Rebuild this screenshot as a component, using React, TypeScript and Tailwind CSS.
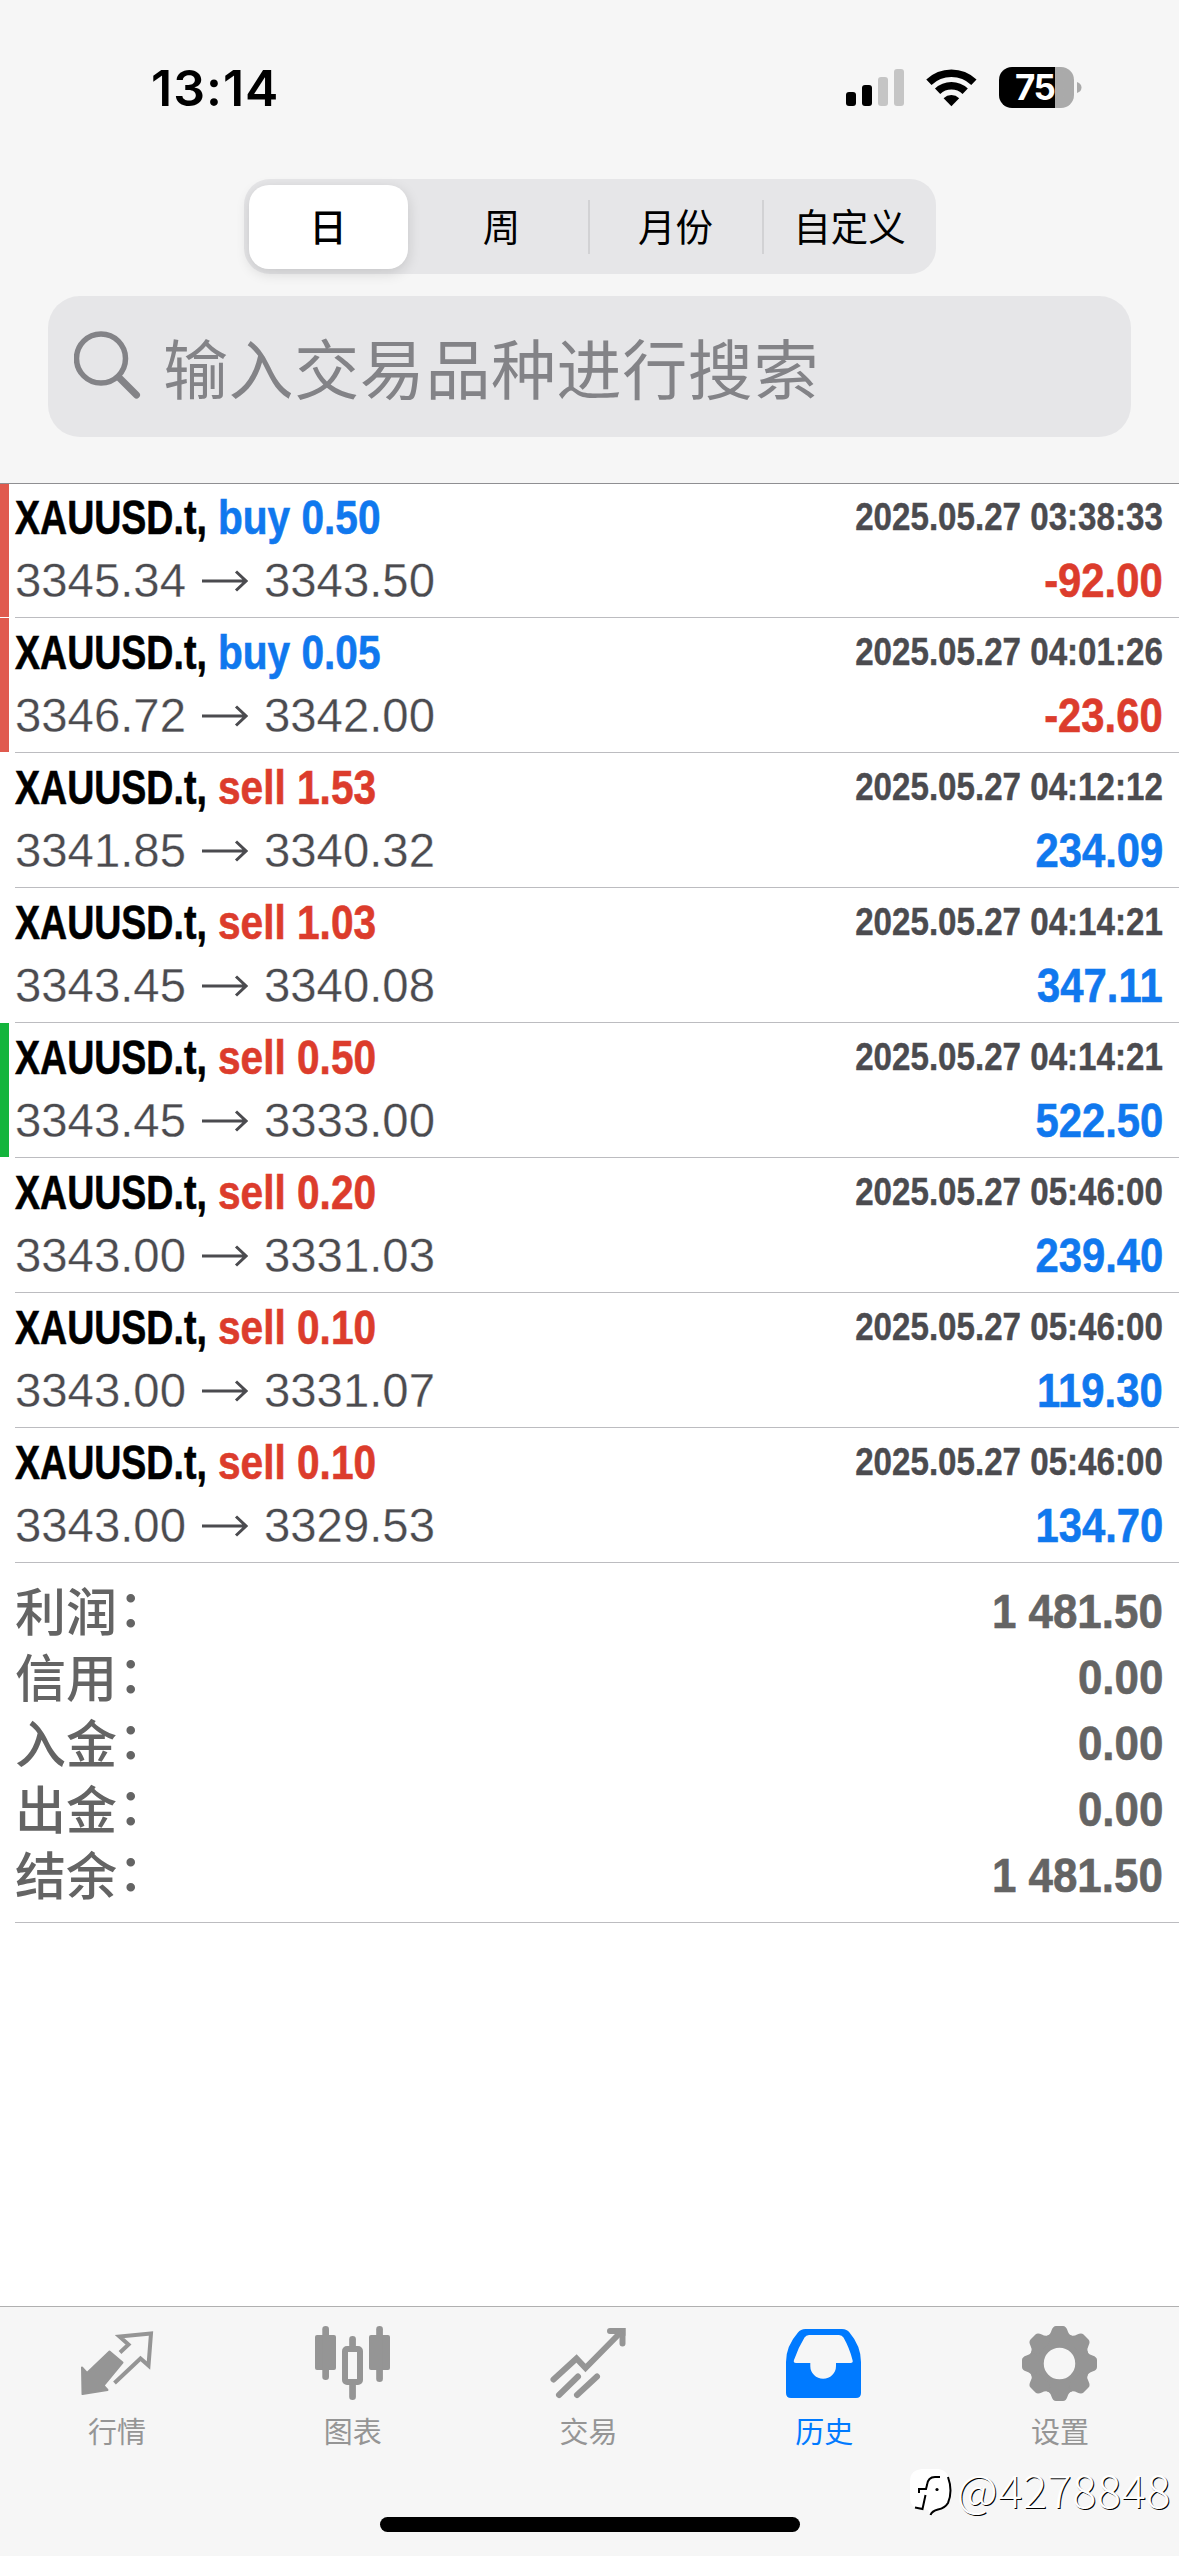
import type { ReactNode } from 'react';
import clsx from 'clsx';

type Deal = {
  side: 'buy' | 'sell';
  volume: string;
  open: string;
  close: string;
  time: string;
  profit: string;
  mark?: 'sl' | 'tp';
};

const deals: Deal[] = [
  { side: 'buy', volume: '0.50', open: '3345.34', close: '3343.50', time: '2025.05.27 03:38:33', profit: '-92.00', mark: 'sl' },
  { side: 'buy', volume: '0.05', open: '3346.72', close: '3342.00', time: '2025.05.27 04:01:26', profit: '-23.60', mark: 'sl' },
  { side: 'sell', volume: '1.53', open: '3341.85', close: '3340.32', time: '2025.05.27 04:12:12', profit: '234.09' },
  { side: 'sell', volume: '1.03', open: '3343.45', close: '3340.08', time: '2025.05.27 04:14:21', profit: '347.11' },
  { side: 'sell', volume: '0.50', open: '3343.45', close: '3333.00', time: '2025.05.27 04:14:21', profit: '522.50', mark: 'tp' },
  { side: 'sell', volume: '0.20', open: '3343.00', close: '3331.03', time: '2025.05.27 05:46:00', profit: '239.40' },
  { side: 'sell', volume: '0.10', open: '3343.00', close: '3331.07', time: '2025.05.27 05:46:00', profit: '119.30' },
  { side: 'sell', volume: '0.10', open: '3343.00', close: '3329.53', time: '2025.05.27 05:46:00', profit: '134.70' },
];

const totals = [
  { label: '利润', value: '1 481.50' },
  { label: '信用', value: '0.00' },
  { label: '入金', value: '0.00' },
  { label: '出金', value: '0.00' },
  { label: '结余', value: '1 481.50' },
];

const periods = ['日', '周', '月份', '自定义'];

function StatusBar() {
  return (
    <div className="flex h-[179px] items-start justify-between pr-[97px] pl-[151px]">
      <span className="mt-[58px] font-['Inter'] text-[50px] leading-[60px] font-semibold tracking-[1px]">13:14</span>
      <div className="mt-[67px] flex">
        <svg width="58" height="41" viewBox="0 0 58 41">
          <rect x="0" y="25" width="10" height="14" rx="3" />
          <rect x="16" y="18" width="10" height="21" rx="3" />
          <rect x="32" y="10" width="10" height="29" rx="3" fill="#c5c5c5" />
          <rect x="48" y="2" width="10" height="37" rx="3" fill="#c5c5c5" />
        </svg>
        <svg className="mt-0.5 ml-[22px]" width="51" height="38" viewBox="0 0 51 38" fill="none" stroke="#000" strokeWidth="7.6">
          <path d="M2.9 13.2A32.6 32.6 0 0 1 47.9 13.2" />
          <path d="M11.6 22.3A20 20 0 0 1 39.2 22.3" />
          <path d="M25.4 37.2 17.6 29.2A11.4 11.4 0 0 1 33.2 29.2Z" fill="#000" stroke="none" />
        </svg>
        <div className="ml-[22px] flex h-[41px] w-[75px] items-center overflow-hidden rounded-[13px] bg-linear-to-r from-black from-75% to-[#aaaaaa] to-75%">
          <span className="ml-4 font-['Inter'] text-[35px] leading-[41px] font-bold tracking-[-1.5px] text-white">75</span>
        </div>
        <svg className="mt-[15px] ml-[3px]" width="5" height="11" viewBox="0 0 5 11">
          <path d="M0 0Q4.500 1.500 4.500 5.500T0 11Z" fill="#aaaaaa" />
        </svg>
      </div>
    </div>
  );
}

function PeriodPicker() {
  return (
    <div className="mx-auto flex h-[95px] w-[692px] items-center rounded-[26px] bg-[#e6e6e8] pl-[5px]">
      {periods.map((period, i) => (
        <div
          key={period}
          className={clsx(
            "flex items-center justify-center pb-[3px] font-['Noto_Sans_CJK_SC',sans-serif] text-[37.5px] text-black",
            i === 0 && 'mr-[8px] h-[84px] w-[159px] rounded-[20px] bg-white font-medium shadow-[0_4px_14px_rgba(0,0,0,0.14)]',
            i > 0 && 'h-[54px] flex-1',
            i > 1 && 'border-l-2 border-[#d2d2d4]',
          )}
        >
          {period}
        </div>
      ))}
    </div>
  );
}

function SearchField() {
  return (
    <div className="mx-12 mt-[22px] flex h-[141px] items-center rounded-[32px] bg-[#e6e6e8] pl-[26px] text-[#838387]">
      <svg width="68" height="68" viewBox="0 0 68 68" fill="none" stroke="currentColor" className="-mt-1">
        <circle cx="27" cy="27.500" r="24.500" strokeWidth="5.500" />
        <path d="M45 46.500 62.500 64" strokeWidth="7" strokeLinecap="round" />
      </svg>
      <span className="mb-[2px] ml-[21px] font-['Noto_Sans_CJK_SC',sans-serif] text-[65px] leading-[90px] tracking-[0.6px]">
        输入交易品种进行搜索
      </span>
    </div>
  );
}

function DealRow({ deal }: { deal: Deal }) {
  const loss = deal.profit.startsWith('-');
  return (
    <div className="flex h-[135px]">
      <div
        className={clsx('h-[134px] w-[9px]', deal.mark === 'sl' && 'bg-[#e05a4e]', deal.mark === 'tp' && 'bg-[#14b53c]')}
      />
      <div className="ml-1.5 flex flex-1 flex-col border-b border-[#bcbcc0] pt-[3px] pr-4 font-['Liberation_Sans',sans-serif]">
        <div className="flex h-[63px] items-center justify-between font-bold">
          <div className="flex text-[47.5px] [-webkit-text-stroke:0.6px]">
            <span className="w-[203px] origin-left scale-x-[0.79] whitespace-nowrap text-black">XAUUSD.t,</span>
            <span
              className={clsx(
                'origin-left scale-x-[0.855] whitespace-nowrap',
                deal.side === 'buy' ? 'text-[#1078ee]' : 'text-[#dc3c2c]',
              )}
            >
              {deal.side} {deal.volume}
            </span>
          </div>
          <span className="origin-right scale-x-[0.872] text-[38px] text-[#4b4b4f] [-webkit-text-stroke:0.4px]">
            {deal.time}
          </span>
        </div>
        <div className="flex h-[64px] items-center justify-between">
          <div className="flex items-center text-[47.3px] text-[#4b4b4f] [-webkit-text-stroke:0.3px_white]">
            {deal.open}
            <svg className="mx-4" width="46" height="22" viewBox="0 0 46 22" fill="none" stroke="#4b4b4f" strokeWidth="3">
              <path d="M0 11H44M34 1.500 44 11 34 20.500" />
            </svg>
            {deal.close}
          </div>
          <span
            className={clsx(
              'origin-right scale-x-[0.88] text-[47.5px] font-bold [-webkit-text-stroke:0.6px]',
              loss ? 'text-[#dc3c2c]' : 'text-[#1078ee]',
            )}
          >
            {deal.profit}
          </span>
        </div>
      </div>
    </div>
  );
}

function Totals() {
  return (
    <div className="ml-[15px] h-[360px] border-b border-[#bcbcc0] pt-4 pr-4 font-['Liberation_Sans','Noto_Sans_CJK_SC',sans-serif] text-[#646464]">
      {totals.map(({ label, value }) => (
        <div key={label} className="flex h-[66px] items-center justify-between">
          <div className="flex items-start pt-[3px] text-[51px] leading-[64px] font-medium">
            <span>{label}</span>
            <span className="-mt-1 ml-px">：</span>
          </div>
          <span className="origin-right scale-x-[0.915] text-[48px] font-bold [-webkit-text-stroke:0.6px]">{value}</span>
        </div>
      ))}
    </div>
  );
}

function QuotesIcon() {
  return (
    <>
      <path
        d="M2 41.500 7 47 29.500 25.500 42.500 36.500 23.500 59.500 27.500 64 2.500 68Z"
        fill="currentColor"
        stroke="currentColor"
        strokeWidth="2"
        strokeLinejoin="round"
      />
      <path
        d="M40 26.500 48.500 18.500 39.500 10.500 71 7.500 68.500 39.500 60.500 32.500 34.500 57"
        fill="none"
        stroke="currentColor"
        strokeWidth="4"
      />
    </>
  );
}

function ChartIcon() {
  return (
    <g fill="currentColor">
      <rect x="-1" y="9" width="21" height="35" rx="2" />
      <rect x="6.300" y="0" width="6.700" height="54" rx="3.300" />
      <rect x="53" y="9" width="21" height="35" rx="2" />
      <rect x="60.200" y="0" width="6.700" height="56" rx="3.300" />
      <rect x="33.200" y="10" width="6.700" height="14" rx="3.300" />
      <rect x="33.200" y="55" width="6.700" height="19" rx="3.300" />
      <rect x="29" y="23" width="15" height="33" rx="2" fill="none" stroke="currentColor" strokeWidth="6" />
    </g>
  );
}

function TradeIcon() {
  return (
    <g fill="none" stroke="currentColor" strokeWidth="6" strokeLinecap="round">
      <path d="M2.500 53.500 25.500 32.500 34.500 42 70 6" />
      <path d="M59 5H71.500V17.500" />
      <path d="M66 2H74.500V10Z" fill="currentColor" stroke="none" />
      <path d="M8 69 27 50.500M26 69 46 50.500" />
    </g>
  );
}

function HistoryIcon() {
  return (
    <path
      fill="currentColor"
      fillRule="evenodd"
      d="M18.500 3H55Q60 3 62.500 6.500 74 20 74 36V67Q74 72 69 72H4Q-1 72-1 67V36Q-1 20 11 6.500 13.500 3 18.500 3ZM22 9Q19 9 17.500 11.500 11 22 7 34 6 37 9 37H23.300V40A12.850 12.850 0 0 0 49 40V37H63.500Q66.500 37 65.500 34 62.500 22 56.500 11.500 55 9 52 9Z"
    />
  );
}

function SettingsIcon() {
  return (
    <g fill="currentColor">
      <circle cx="36.500" cy="37.500" r="23" fill="none" stroke="currentColor" strokeWidth="14.500" />
      {[0, 45, 90, 135, 180, 225, 270, 315].map((angle) => (
        <path
          key={angle}
          transform={`rotate(${angle} 36.500 37.500)`}
          d="M24 10Q27.500 8.500 28.500 4.500 30 0 33 0H40Q43 0 44.500 4.500 45.500 8.500 49 10L44 16H29Z"
        />
      ))}
    </g>
  );
}

function Tab({ label, active, children }: { label: string; active?: boolean; children: ReactNode }) {
  return (
    <div className={clsx('flex flex-1 flex-col items-center pt-[19px]', active ? 'text-[#007aff]' : 'text-[#959595]')}>
      <svg width="76" height="76" viewBox="0 0 76 76" className="overflow-visible">
        {children}
      </svg>
      <span className="mt-2 mr-[2px] font-['Noto_Sans_CJK_SC',sans-serif] text-[29px] leading-[40px]">{label}</span>
    </div>
  );
}

function Watermark() {
  return (
    <div className="absolute right-[8px] bottom-[37px] flex items-end text-white">
      <svg width="44" height="50" viewBox="0 0 44 50">
        <path d="M12 0H28Q39 1 39.500 14V29Q39 38 28 40 22 41 20 45L18 41 6 39Q0 37 0 28V12Q0 1 12 0Z" fill="#fff" />
        <path d="M38 8Q43 22 38 34 35 39 28 40.500 22 42 20.500 46" fill="none" stroke="#000" strokeWidth="2" />
        <path d="M30 8H25Q18 8 17 16L16 20H9V24M15.500 26 12.500 40 5 38.500" fill="none" stroke="#000" strokeWidth="2" />
        <circle cx="27" cy="20.500" r="1.600" fill="#000" />
      </svg>
      <span className="mb-[5px] ml-[3px] font-['Noto_Sans_CJK_SC',sans-serif] text-[45px] leading-[50px] font-light tracking-[0.6px] [text-shadow:1px_1px_0_#000]">
        @4278848
      </span>
    </div>
  );
}

export default function App() {
  return (
    <div className="relative flex h-[2556px] w-[1179px] flex-col bg-white">
      <header className="relative z-10 h-[484px] border-b border-[#8f8f92] bg-[#f6f6f6]">
        <StatusBar />
        <PeriodPicker />
        <SearchField />
      </header>
      <main className="-mt-px flex-1">
        {deals.map((deal, i) => (
          <DealRow key={i} deal={deal} />
        ))}
        <Totals />
      </main>
      <footer className="flex h-[250px] flex-col border-t border-[#b0b0b0] bg-[#f6f6f6]">
        <div className="flex flex-1">
          <Tab label="行情">
            <QuotesIcon />
          </Tab>
          <Tab label="图表">
            <ChartIcon />
          </Tab>
          <Tab label="交易">
            <TradeIcon />
          </Tab>
          <Tab label="历史" active>
            <HistoryIcon />
          </Tab>
          <Tab label="设置">
            <SettingsIcon />
          </Tab>
        </div>
        <div className="mx-auto mb-6 h-[15px] w-[420px] rounded-full bg-black" />
      </footer>
      <Watermark />
    </div>
  );
}
